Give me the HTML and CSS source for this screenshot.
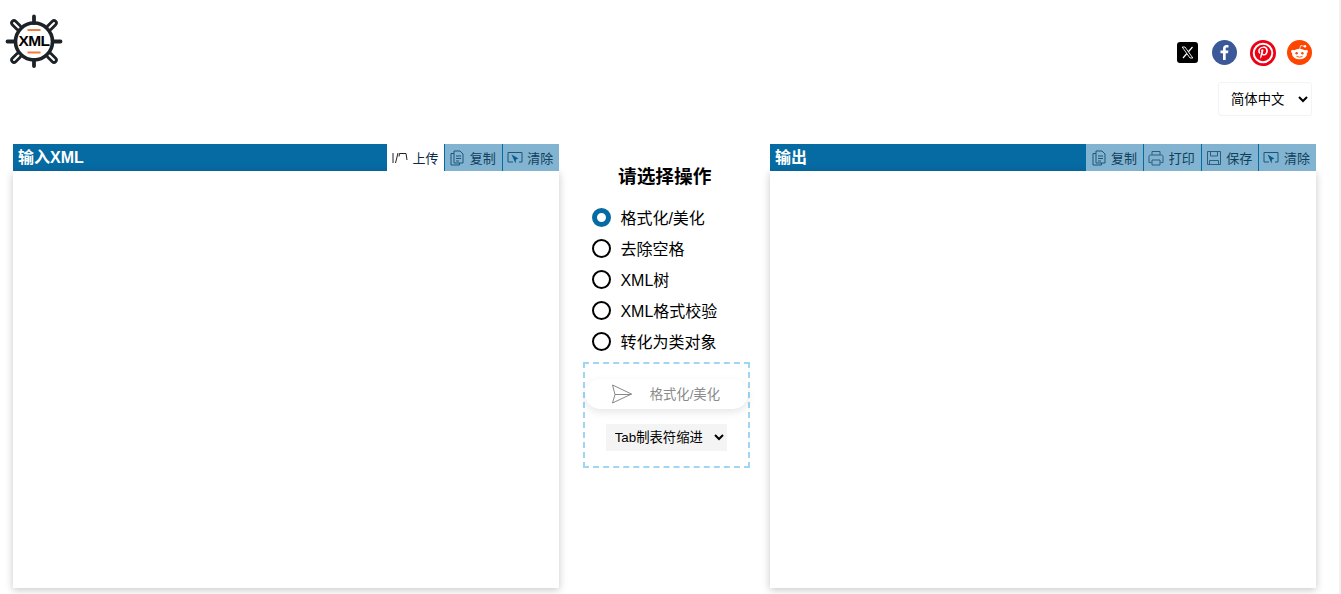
FILE: index.html
```html
<!DOCTYPE html>
<html lang="zh-CN">
<head>
<meta charset="utf-8">
<title>XML 格式化</title>
<link rel="stylesheet" href="styles.css">
</head>
<body>
<div class="page">
<header class="top">
  <a class="logo" href="#">
    <svg class="logo-wheel" viewBox="0 0 58 54" width="58" height="54">
      <g stroke="#1c2226" fill="none" stroke-linecap="round">
        <circle cx="29" cy="27.500" r="18.500" stroke-width="3.600"/>
        <path d="M29 2.500V9M29 46V52M2.500 27.500H10M48 27.500H55.500" stroke-width="3.800"/>
        <path d="M9 9L13.500 13.500M49 9L44.500 13.500M9 46L13.500 41.500M49 46L44.500 41.500" stroke-width="7.500"/>
        <path d="M9 9L13.500 13.500M49 9L44.500 13.500M9 46L13.500 41.500M49 46L44.500 41.500" stroke="#fff" stroke-width="2"/>
      </g>
      <path d="M22.500 16H35.500M22.500 38.500H35.500" stroke="#f47b3a" stroke-width="2"/>
    </svg>
    <span class="logo-text">XML</span>
  </a>
  <div class="top-right">
    <div class="socials">
      <svg class="ic-x" viewBox="0 0 21 21" width="21" height="21"><rect width="21" height="21" rx="3" fill="#000"/><path d="M15.500 5L6 16" stroke="#fff" stroke-width="1.200"/><path d="M5.200 5h2.800l7.800 11h-2.800z" fill="#000" stroke="#fff" stroke-width=".9"/></svg>
      <svg class="ic-fb" viewBox="0 0 25 25" width="25" height="25"><circle cx="12.500" cy="12.500" r="12.500" fill="#3b5998"/><path d="M13.700 20v-6.800H16l.4-2.700h-2.700V8.900c0-.8.3-1.300 1.400-1.300h1.400V5.200c-.3 0-1.100-.1-2-.1-2.100 0-3.500 1.300-3.500 3.600v1.800H8.500v2.700h2.500V20z" fill="#fff"/></svg>
      <svg class="ic-pin" viewBox="0 0 26 26" width="26" height="26"><circle cx="13" cy="13" r="13" fill="#ec0014"/><circle cx="13" cy="13" r="9.300" fill="none" stroke="#fff" stroke-width="2"/><path d="M13.300 6.800c-3.400 0-5.100 2.300-5.100 4.300 0 1.200.4 2.300 1.500 2.700.2.100.3 0 .4-.2l.2-.6c.1-.2 0-.3-.1-.5-.3-.4-.5-.7-.5-1.400 0-1.900 1.400-3.400 3.500-3.400 1.900 0 3 1.200 3 2.800 0 2-.9 3.700-2.300 3.700-.7 0-1.300-.6-1.100-1.400.2-.9.600-1.800.600-2.500 0-.6-.3-1-1-1-.7 0-1.300.8-1.300 1.700 0 .6.200 1 .2 1l-.9 3.800c-.2.900-.1 2.100 0 2.600.6.200 1-1 1.200-1.600l.5-2.100c.3.500 1 .9 1.800.9 2.400 0 4-2.200 4-5.100 0-2.200-1.900-4.300-4.600-4.300z" fill="#fff"/></svg>
      <svg class="ic-red" viewBox="0 0 25 25" width="25" height="25"><circle cx="12.500" cy="12.500" r="12.500" fill="#ff4500"/><ellipse cx="12.500" cy="14" rx="7.500" ry="5.200" fill="#fff"/><circle cx="5.800" cy="11.500" r="1.700" fill="#fff"/><circle cx="19.200" cy="11.500" r="1.700" fill="#fff"/><circle cx="18" cy="6.300" r="1.300" fill="#fff"/><path d="M12.700 9l1-3.500 4 .8" stroke="#fff" stroke-width=".8" fill="none"/><circle cx="9.600" cy="13.200" r="1.200" fill="#ff4500"/><circle cx="15.400" cy="13.200" r="1.200" fill="#ff4500"/><path d="M9.500 16.300q3 1.800 6 0" stroke="#ff4500" stroke-width=".9" fill="none"/></svg>
    </div>
    <select class="lang">
      <option>简体中文</option>
    </select>
  </div>
</header>

<main class="workspace">
  <section class="panel panel-left">
    <div class="bar">
      <h2 class="bar-title">输入XML</h2>
      <button class="tool tool-active">
        <svg class="upload" viewBox="0 0 16 12" width="16" height="12"><path d="M1 1V11M3.500 11L6 1M7 4.500L7.500 1.500H14L15 8" stroke="#222" stroke-width="1" fill="none"/></svg>
        上传
      </button>
      <button class="tool">
        <svg viewBox="0 0 16 16" width="16" height="16"><use href="#i-copy"/></svg>复制
      </button>
      <button class="tool">
        <svg viewBox="0 0 16 16" width="16" height="16"><use href="#i-clear"/></svg>清除
      </button>
    </div>
    <div class="editor"></div>
  </section>

  <aside class="actions">
    <h3 class="actions-title">请选择操作</h3>
    <ul class="options">
      <li class="option"><span class="radio radio-on"></span>格式化/美化</li>
      <li class="option"><span class="radio"></span>去除空格</li>
      <li class="option"><span class="radio"></span>XML树</li>
      <li class="option"><span class="radio"></span>XML格式校验</li>
      <li class="option"><span class="radio"></span>转化为类对象</li>
    </ul>
    <div class="run-box">
      <button class="run">
        <svg viewBox="0 0 22 20" width="22" height="20"><path d="M1.500 1L20.500 10L1.500 19L4 10.500ZM4 10.500H20.500" fill="none" stroke="#888" stroke-width="1"/></svg>
        <span class="run-label">格式化/美化</span>
      </button>
      <select class="indent"><option>Tab制表符缩进</option></select>
    </div>
  </aside>

  <section class="panel">
    <div class="bar">
      <h2 class="bar-title">输出</h2>
      <button class="tool">
        <svg viewBox="0 0 16 16" width="16" height="16"><use href="#i-copy"/></svg>复制
      </button>
      <button class="tool">
        <svg viewBox="0 0 16 16" width="16" height="16"><path d="M4 5V1.500H12V5M3.500 12.500H1V6.500Q1 5 2.500 5H13.500Q15 5 15 6.500V12.500H12.500M4 10H12V15H4Z" fill="none" stroke="#2a5f7e" stroke-width="1"/></svg>打印
      </button>
      <button class="tool">
        <svg viewBox="0 0 16 16" width="16" height="16"><path d="M1.500 1.500H14.500V14.500H1.500ZM4.500 1.500V6H11.500V1.500M3.500 10.500H12.500V14.500H3.500Z" fill="none" stroke="#2a5f7e" stroke-width="1"/></svg>保存
      </button>
      <button class="tool">
        <svg viewBox="0 0 16 16" width="16" height="16"><use href="#i-clear"/></svg>清除
      </button>
    </div>
    <div class="editor"></div>
  </section>
</main>
</div>

<svg class="defs" width="0" height="0">
  <symbol id="i-copy" viewBox="0 0 16 16">
    <path d="M5 3.500H2V15H10.500V13M5 1H11L14 4V13H5ZM7 6H12M7 8.500H12M7 11H10" fill="none" stroke="#1d5677" stroke-width="1"/>
  </symbol>
  <symbol id="i-clear" viewBox="0 0 16 16">
    <path d="M1 2.500H15V12H12M6 12H1V2.500" fill="none" stroke="#1d5677" stroke-width="1"/>
    <path d="M4.500 4.500L11.500 8.500L9 9.500L8.500 13.500Z" fill="#0b5d8c"/>
  </symbol>
</svg>
</body>
</html>
```
FILE: styles.css
```css
* { box-sizing: border-box; }
html, body { margin: 0; padding: 0; height: 100%; }
body {
  background: #fff;
  color: #000;
  font-family: "Liberation Sans", "Noto Sans CJK SC", sans-serif;
  overflow: hidden;
  border-right: 2px solid #f1f1f1;
}
.page { width: 1335px; height: 594px; }
.defs { display: block; height: 0; }

.top { display: flex; justify-content: space-between; height: 144px; }
.logo { position: relative; display: block; width: 58px; height: 54px; margin: 14px 0 0 5px; text-decoration: none; }
.logo-wheel { display: block; }
.logo-text {
  position: absolute; left: 11px; top: 18px; width: 36px; text-align: center;
  font: 700 15.500px/18px "Liberation Sans", sans-serif; color: #000; letter-spacing: -.6px;
}
.top-right { display: flex; flex-direction: column; align-items: flex-end; padding: 39px 23px 0 0; }
.socials { display: flex; align-items: center; height: 27px; }
.ic-x { margin-right: 14px; }
.ic-fb { margin-right: 13px; }
.ic-pin { margin-right: 11px; }
.lang {
  margin-top: 16px; width: 94px; height: 34px; padding: 0 0 0 8px;
  font: 13.333px "Liberation Sans", "Noto Sans CJK SC", sans-serif; color: #000;
  background: #fff; border: 1px solid #f3f3f3; border-radius: 3px;
}

.workspace { display: flex; padding-left: 13px; }
.panel { width: 546px; flex: none; }
.panel-left { width: 546.400px; }
.bar { display: flex; height: 27px; background: #076ba3; }
.bar-title {
  flex: 1; margin: 0; padding-left: 5px;
  font: 700 16px/28px "Liberation Sans", "Noto Sans CJK SC", sans-serif; color: #fff;
}
.tool {
  display: flex; align-items: center; gap: 4.500px; flex: none; width: 57.600px; height: 27px; padding: 0 0 0 4px;
  border: 0; border-left: 1px solid #076ba3; background: #82b4d1; color: #103f5b;
  font: 13px "Liberation Sans", "Noto Sans CJK SC", sans-serif;
}
.bar-title + .tool { border-left: 0; padding-left: 5px; }
.tool-active { background: #fff; color: #0b2a4a; gap: 5px; }
.upload { display: block; }
.editor { height: 417px; background: #fff; box-shadow: 0 2px 8px rgba(0,0,0,.22); }

.actions { width: 210.600px; flex: none; display: flex; flex-direction: column; align-items: center; padding-top: 20px; }
.actions-title { margin: 0 0 12px; font: 700 18.720px/26px "Liberation Sans", "Noto Sans CJK SC", sans-serif; text-align: center; }
.options { list-style: none; margin: 0; padding: 0 0 0 23px; width: 100%; }
.option { display: flex; align-items: flex-start; gap: 9px; height: 31px; font-size: 16px; line-height: 34px; padding-left: 10px; }
.radio { width: 19px; height: 19px; margin-top: 6px; border-radius: 50%; border: 2px solid #000; background: #fff; flex: none; }
.radio-on { border: 5px solid #076ba3; }
.run-box {
  width: 167px; height: 106px; margin-top: 5px; margin-left: 3px;
  border: 2px dashed #a0d6f3;
  display: flex; flex-direction: column; align-items: center; padding-top: 15px;
}
.run {
  display: flex; align-items: center; gap: 17px; width: 163px; height: 30px; padding: 0 0 0 26px;
  border: 0; border-radius: 15px; background: #fff; color: #8a8a8a;
  box-shadow: 0 3px 8px rgba(0,0,0,.1);
  font: 13.333px "Liberation Sans", "Noto Sans CJK SC", sans-serif;
}
.run-label { padding-bottom: 2px; }
.indent {
  margin-top: 15px; width: 121px; height: 27px; padding: 0 0 0 5px;
  border: 0; background: #f4f4f4; color: #000;
  font: 13.333px "Liberation Sans", "Noto Sans CJK SC", sans-serif;
}
```
